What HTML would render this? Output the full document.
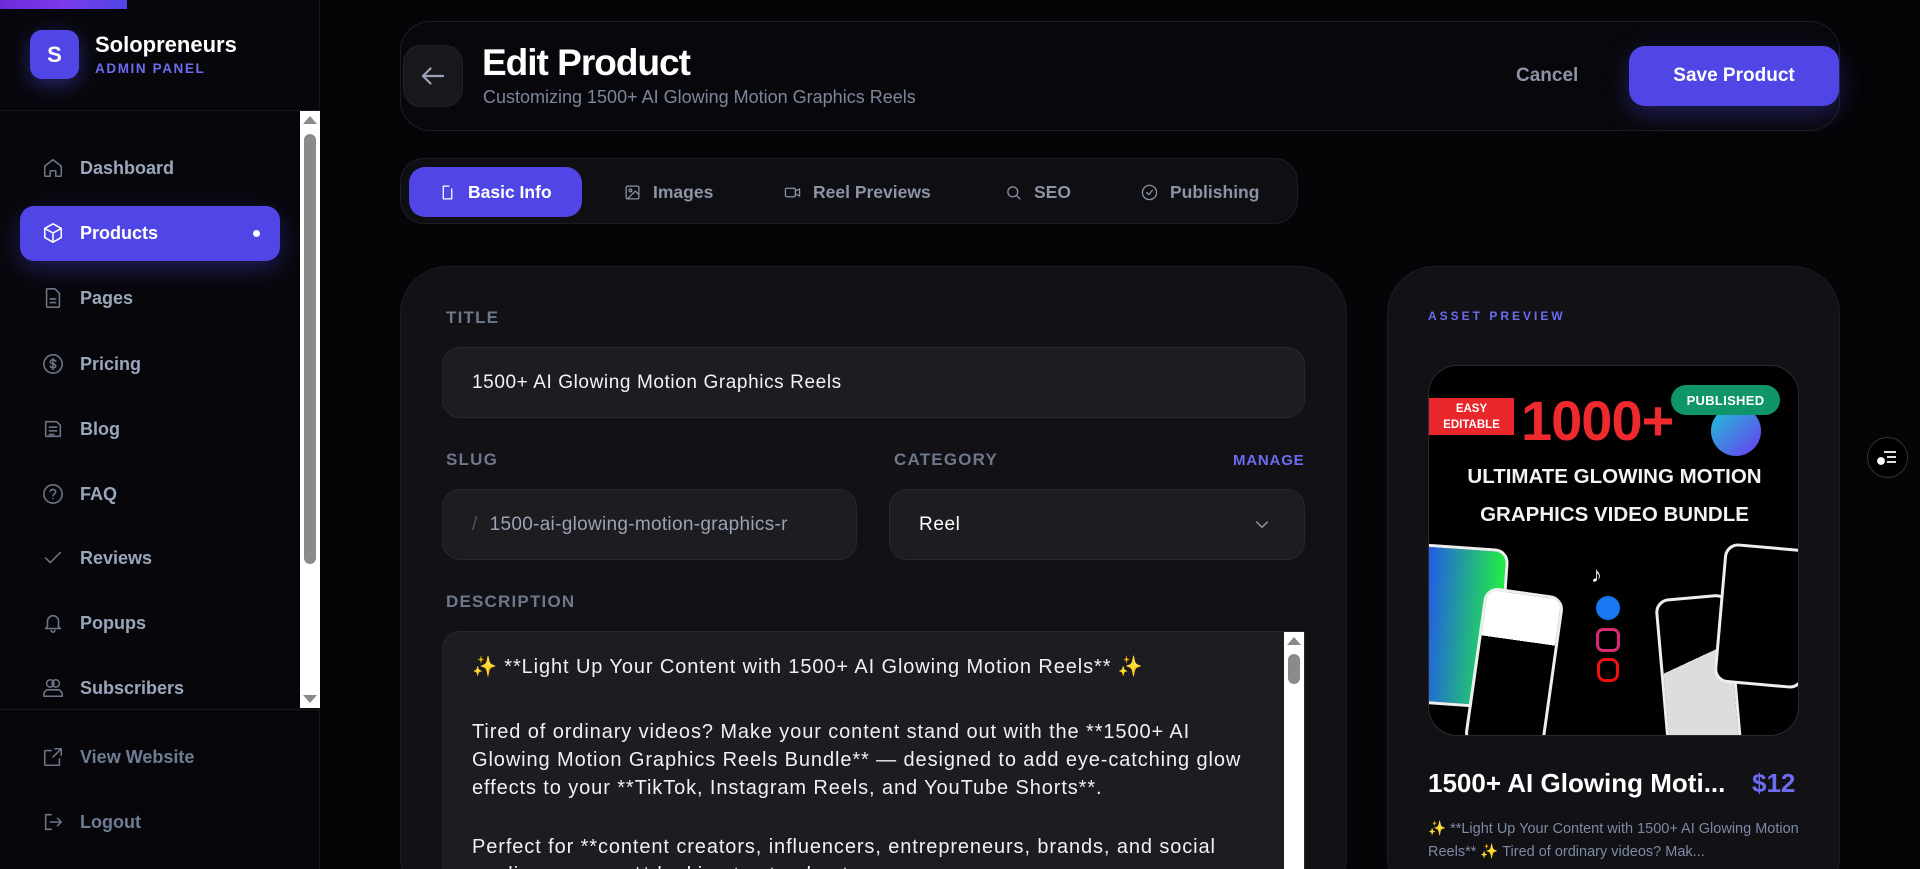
<!DOCTYPE html>
<html><head><meta charset="utf-8"><style>
*{box-sizing:border-box;margin:0;padding:0}
html,body{width:1920px;height:869px;overflow:hidden}
body{background:#050507;font-family:"Liberation Sans",sans-serif;color:#fff;position:relative}
#w{position:relative;width:1920px;height:869px;overflow:hidden}
.abs{position:absolute}
.sb{left:0;top:0;width:320px;height:869px;background:#07070b;border-right:1px solid #15151b}
.nav{position:absolute;left:42px;display:flex;align-items:center;font-size:18px;font-weight:700;color:#9aa6ba}
.nav svg{width:22px;height:22px;margin-right:16px;stroke:#6b7587;fill:none;stroke-width:1.7;stroke-linecap:round;stroke-linejoin:round}
.card{background:#111116;border:1px solid #1d1d24}
.lbl{position:absolute;font-size:17px;font-weight:700;letter-spacing:1.2px;color:#6f788b}
.inp{position:absolute;background:#1c1c21;border:1px solid #27272e;border-radius:18px;font-size:19px;letter-spacing:.6px;display:flex;align-items:center;padding-left:29px}
.tab{position:absolute;top:167px;height:50px;display:flex;align-items:center;font-size:17.5px;font-weight:700;color:#8b93a5}
.tab svg{width:17px;height:17px;margin-right:12px;stroke:#8b93a5;fill:none;stroke-width:1.8;stroke-linecap:round;stroke-linejoin:round}
.ta p{position:absolute;left:29px;font-size:20px;line-height:28px;color:#f1f1f4;white-space:nowrap;letter-spacing:.9px}
</style></head><body><div id="w">
<div class="abs" style="left:0;top:0;width:127px;height:9px;background:linear-gradient(90deg,#6d28d9,#7c3aed,#4f46e5);z-index:2"></div>
<div class="abs sb">
  <div class="abs" style="left:30px;top:30px;width:49px;height:49px;border-radius:12px;background:#4f46e5;box-shadow:0 6px 20px rgba(79,70,229,.45);display:flex;align-items:center;justify-content:center;font-weight:700;font-size:22px">S</div>
  <div class="abs" style="left:95px;top:32px;font-size:22px;font-weight:700">Solopreneurs</div>
  <div class="abs" style="left:95px;top:61px;font-size:13.5px;font-weight:700;letter-spacing:1.6px;color:#6c6cf0">ADMIN PANEL</div>
  <div class="abs" style="left:0;top:110px;width:320px;height:1px;background:#18181f"></div>
  <div class="abs" style="left:20px;top:206px;width:260px;height:55px;border-radius:14px;background:#4f46e5;box-shadow:0 8px 24px rgba(79,70,229,.35)"></div>
  <div class="abs" style="left:253px;top:230px;width:7px;height:7px;border-radius:50%;background:#fff"></div>
  <div class="nav" style="top:157px"><svg viewBox="0 0 24 24"><path d="M3 10l9-7 9 7v10a1 1 0 0 1-1 1h-5v-6h-6v6H4a1 1 0 0 1-1-1z"/></svg>Dashboard</div>
  <div class="nav" style="top:222px;color:#fff"><svg viewBox="0 0 24 24" style="stroke:#fff"><path d="M12 2l9 5v10l-9 5-9-5V7z"/><path d="M3 7l9 5 9-5M12 12v10"/></svg>Products</div>
  <div class="nav" style="top:287px"><svg viewBox="0 0 24 24"><path d="M14 2H6a1 1 0 0 0-1 1v18a1 1 0 0 0 1 1h12a1 1 0 0 0 1-1V7z"/><path d="M9 13h6M9 17h6"/></svg>Pages</div>
  <div class="nav" style="top:353px"><svg viewBox="0 0 24 24"><circle cx="12" cy="12" r="10"/><path d="M15 9c-.5-1-1.6-1.5-3-1.5-1.7 0-3 .8-3 2s1.3 1.8 3 2.2 3 1 3 2.3-1.3 2-3 2c-1.5 0-2.6-.6-3-1.6M12 6v12"/></svg>Pricing</div>
  <div class="nav" style="top:418px"><svg viewBox="0 0 24 24"><path d="M4 4h12l4 4v12H4z"/><path d="M8 10h8M8 14h8M8 18h5"/></svg>Blog</div>
  <div class="nav" style="top:483px"><svg viewBox="0 0 24 24"><circle cx="12" cy="12" r="10"/><path d="M9.1 9a3 3 0 0 1 5.8 1c0 2-3 2.5-3 4M12 17h.01"/></svg>FAQ</div>
  <div class="nav" style="top:547px"><svg viewBox="0 0 24 24"><path d="M4 12l5 5L20 6"/></svg>Reviews</div>
  <div class="nav" style="top:612px"><svg viewBox="0 0 24 24"><path d="M6 16V10a6 6 0 0 1 12 0v6l2 2H4z"/><path d="M10 20a2 2 0 0 0 4 0"/></svg>Popups</div>
  <div class="nav" style="top:677px"><svg viewBox="0 0 24 24"><circle cx="9" cy="7" r="4"/><circle cx="15" cy="7" r="4"/><path d="M2 21v-2a5 5 0 0 1 5-5h10a5 5 0 0 1 5 5v2z"/></svg>Subscribers</div>
  <div class="abs" style="left:300px;top:111px;width:20px;height:597px;background:#fff"></div>
  <div class="abs" style="left:303px;top:116px;width:0;height:0;border-left:7px solid transparent;border-right:7px solid transparent;border-bottom:8px solid #8a8a8a"></div>
  <div class="abs" style="left:304px;top:134px;width:12px;height:430px;border-radius:6px;background:#8a8a8a"></div>
  <div class="abs" style="left:303px;top:695px;width:0;height:0;border-left:7px solid transparent;border-right:7px solid transparent;border-top:8px solid #8a8a8a"></div>
  <div class="abs" style="left:0;top:709px;width:320px;height:1px;background:#18181f"></div>
  <div class="nav" style="top:746px;color:#6f7c93"><svg viewBox="0 0 24 24"><path d="M14 3h7v7M21 3l-9 9"/><path d="M19 14v6a1 1 0 0 1-1 1H4a1 1 0 0 1-1-1V6a1 1 0 0 1 1-1h6"/></svg>View Website</div>
  <div class="nav" style="top:811px;color:#6f7c93"><svg viewBox="0 0 24 24"><path d="M10 4H4v16h6"/><path d="M9 12h12M17 8l4 4-4 4"/></svg>Logout</div>
</div>

<div class="abs card" style="left:400px;top:21px;width:1440px;height:110px;border-radius:30px;background:#08080c"></div>
<div class="abs" style="left:403px;top:45px;width:60px;height:62px;border-radius:18px;background:#17171c;border:1px solid #222229"></div>
<svg class="abs" style="left:418px;top:61px" width="30" height="30" viewBox="0 0 24 24" fill="none" stroke="#9aa3b5" stroke-width="1.8" stroke-linecap="round" stroke-linejoin="round"><path d="M20 12H4M10 6l-6 6 6 6"/></svg>
<div class="abs" style="left:482px;top:42px;font-size:37px;font-weight:700;letter-spacing:-1px">Edit Product</div>
<div class="abs" style="left:483px;top:87px;font-size:18px;color:#7d8699">Customizing 1500+ AI Glowing Motion Graphics Reels</div>
<div class="abs" style="left:1516px;top:65px;font-size:19px;font-weight:700;color:#8b93a5">Cancel</div>
<div class="abs" style="left:1629px;top:46px;width:210px;height:60px;border-radius:16px;background:#4f46e5;box-shadow:0 8px 24px rgba(79,70,229,.35);display:flex;align-items:center;justify-content:center;font-size:19px;font-weight:700">Save Product</div>

<div class="abs" style="left:400px;top:158px;width:898px;height:66px;border-radius:24px;background:#0e0e13;border:1px solid #1d1d24"></div>
<div class="abs" style="left:409px;top:167px;width:173px;height:50px;border-radius:16px;background:#4f46e5"></div>
<div class="tab" style="left:439px;color:#fff"><svg viewBox="0 0 24 24" style="stroke:#fff"><path d="M14 3H6v18h12V7"/></svg>Basic Info</div>
<div class="tab" style="left:624px"><svg viewBox="0 0 24 24"><rect x="3" y="3" width="18" height="18" rx="2"/><circle cx="9" cy="9" r="2"/><path d="M21 15l-5-5L5 21"/></svg>Images</div>
<div class="tab" style="left:784px"><svg viewBox="0 0 24 24"><rect x="2" y="6" width="14" height="12" rx="2"/><path d="M16 10l6-3v10l-6-3"/></svg>Reel Previews</div>
<div class="tab" style="left:1005px"><svg viewBox="0 0 24 24"><circle cx="11" cy="11" r="7"/><path d="M21 21l-5-5"/></svg>SEO</div>
<div class="tab" style="left:1141px"><svg viewBox="0 0 24 24"><circle cx="12" cy="12" r="10"/><path d="M8 12l3 3 5-6"/></svg>Publishing</div>

<div class="abs card" style="left:400px;top:266px;width:947px;height:640px;border-radius:48px"></div>
<div class="lbl" style="left:446px;top:308px">TITLE</div>
<div class="inp" style="left:442px;top:347px;width:863px;height:71px;color:#f3f3f5">1500+ AI Glowing Motion Graphics Reels</div>
<div class="lbl" style="left:446px;top:450px">SLUG</div>
<div class="lbl" style="left:894px;top:450px">CATEGORY</div>
<div class="abs" style="left:1233px;top:452px;font-size:15px;font-weight:700;letter-spacing:.8px;color:#6c6cf0">MANAGE</div>
<div class="inp" style="left:442px;top:489px;width:415px;height:71px;color:#9aa2b3;overflow:hidden;white-space:nowrap;letter-spacing:.3px"><span style="color:#4d5463;margin-right:12px">/</span>1500-ai-glowing-motion-graphics-r</div>
<div class="inp" style="left:889px;top:489px;width:416px;height:71px;color:#fff">Reel</div>
<svg class="abs" style="left:1252px;top:514px" width="20" height="20" viewBox="0 0 24 24" fill="none" stroke="#8b93a5" stroke-width="1.8"><path d="M5 9l7 7 7-7"/></svg>
<div class="lbl" style="left:446px;top:592px">DESCRIPTION</div>
<div class="abs ta" style="left:442px;top:631px;width:863px;height:238px;background:#1c1c21;border:1px solid #27272e;border-bottom:none;border-radius:18px 0 0 0;overflow:hidden">
  <p style="top:21px">✨ **Light Up Your Content with 1500+ AI Glowing Motion Reels** ✨</p>
  <p style="top:86px">Tired of ordinary videos? Make your content stand out with the **1500+ AI<br>Glowing Motion Graphics Reels Bundle** — designed to add eye-catching glow<br>effects to your **TikTok, Instagram Reels, and YouTube Shorts**.</p>
  <p style="top:201px">Perfect for **content creators, influencers, entrepreneurs, brands, and social<br>media managers** looking to stand out.</p>
  <div class="abs" style="right:0;top:0;width:20px;height:260px;background:#fff"></div>
  <div class="abs" style="right:3px;top:5px;width:0;height:0;border-left:7px solid transparent;border-right:7px solid transparent;border-bottom:8px solid #8a8a8a"></div>
  <div class="abs" style="right:4px;top:22px;width:12px;height:30px;border-radius:6px;background:#8a8a8a"></div>
</div>

<div class="abs card" style="left:1387px;top:266px;width:453px;height:640px;border-radius:48px"></div>
<div class="abs" style="left:1428px;top:309px;font-size:12px;font-weight:700;letter-spacing:3px;color:#6c6cf0">ASSET PREVIEW</div>
<div class="abs" style="left:1428px;top:365px;width:371px;height:371px;border-radius:29px;background:#000;border:1px solid #2a2a30;overflow:hidden">
  <div class="abs" style="left:0;top:32px;width:85px;height:37px;background:#e8262b;color:#fff;font-size:11.5px;font-weight:700;text-align:center;line-height:16px;padding-top:3px">EASY<br>EDITABLE</div>
  <div class="abs" style="left:92px;top:22px;font-size:56px;font-weight:700;color:#ee2a2e;letter-spacing:-1px">1000+</div>
  <div class="abs" style="left:282px;top:40px;width:50px;height:50px;border-radius:50%;background:linear-gradient(135deg,#1ec6d6,#6a3bf0)"></div>
  <div class="abs" style="left:0;top:92px;width:371px;text-align:center;font-size:20.5px;font-weight:700;line-height:38px;color:#f3f3f3">ULTIMATE GLOWING MOTION<br>GRAPHICS VIDEO BUNDLE</div>
  <div class="abs" style="left:-20px;top:180px;width:95px;height:160px;border:3px solid #eee;border-radius:14px;background:linear-gradient(90deg,#2244ff,#22ee44);transform:rotate(4deg)"></div>
  <div class="abs" style="left:45px;top:225px;width:80px;height:160px;border:3px solid #eee;border-radius:14px;background:linear-gradient(#fff 0 30%,#000 30%);transform:rotate(8deg)"></div>
  <div class="abs" style="left:232px;top:230px;width:75px;height:160px;border:3px solid #eee;border-radius:14px;background:linear-gradient(160deg,#000 40%,#ddd 40%);transform:rotate(-5deg)"></div>
  <div class="abs" style="left:290px;top:180px;width:90px;height:140px;border:3px solid #eee;border-radius:14px;background:#000;transform:rotate(5deg)"></div>
  <div class="abs" style="left:167px;top:230px;width:24px;height:24px;border-radius:50%;background:#1877f2"></div>
  <div class="abs" style="left:167px;top:262px;width:24px;height:24px;border-radius:7px;border:3px solid #d62976"></div>
  <div class="abs" style="left:168px;top:292px;width:22px;height:24px;border-radius:8px;border:3px solid #e11"></div>
  <div class="abs" style="left:162px;top:196px;font-size:22px;color:#fff;font-weight:700">♪</div>
</div>
<div class="abs" style="left:1671px;top:385px;width:109px;height:30px;border-radius:15px;background:#10956a;color:#fff;font-size:13px;font-weight:700;display:flex;align-items:center;justify-content:center;letter-spacing:.3px">PUBLISHED</div>
<div class="abs" style="left:1428px;top:768px;font-size:26px;font-weight:700">1500+ AI Glowing Moti...</div>
<div class="abs" style="left:1752px;top:768px;font-size:26px;font-weight:700;color:#6c6cf0">$12</div>
<div class="abs" style="left:1428px;top:818px;font-size:14.5px;line-height:23px;color:#7d8aa5;width:375px">✨ **Light Up Your Content with 1500+ AI Glowing Motion Reels** ✨ Tired of ordinary videos? Mak...</div>

<div class="abs" style="left:1867px;top:437px;width:41px;height:41px;border-radius:50%;background:#000;border:1px solid #333"></div>
<svg class="abs" style="left:1875px;top:446px" width="24" height="24" viewBox="0 0 24 24" fill="none" stroke="#fff" stroke-width="1.8"><path d="M9 6h12M12 11h9M12 16h9"/><circle cx="6" cy="15" r="3" fill="#fff"/></svg>
</div></body></html>
